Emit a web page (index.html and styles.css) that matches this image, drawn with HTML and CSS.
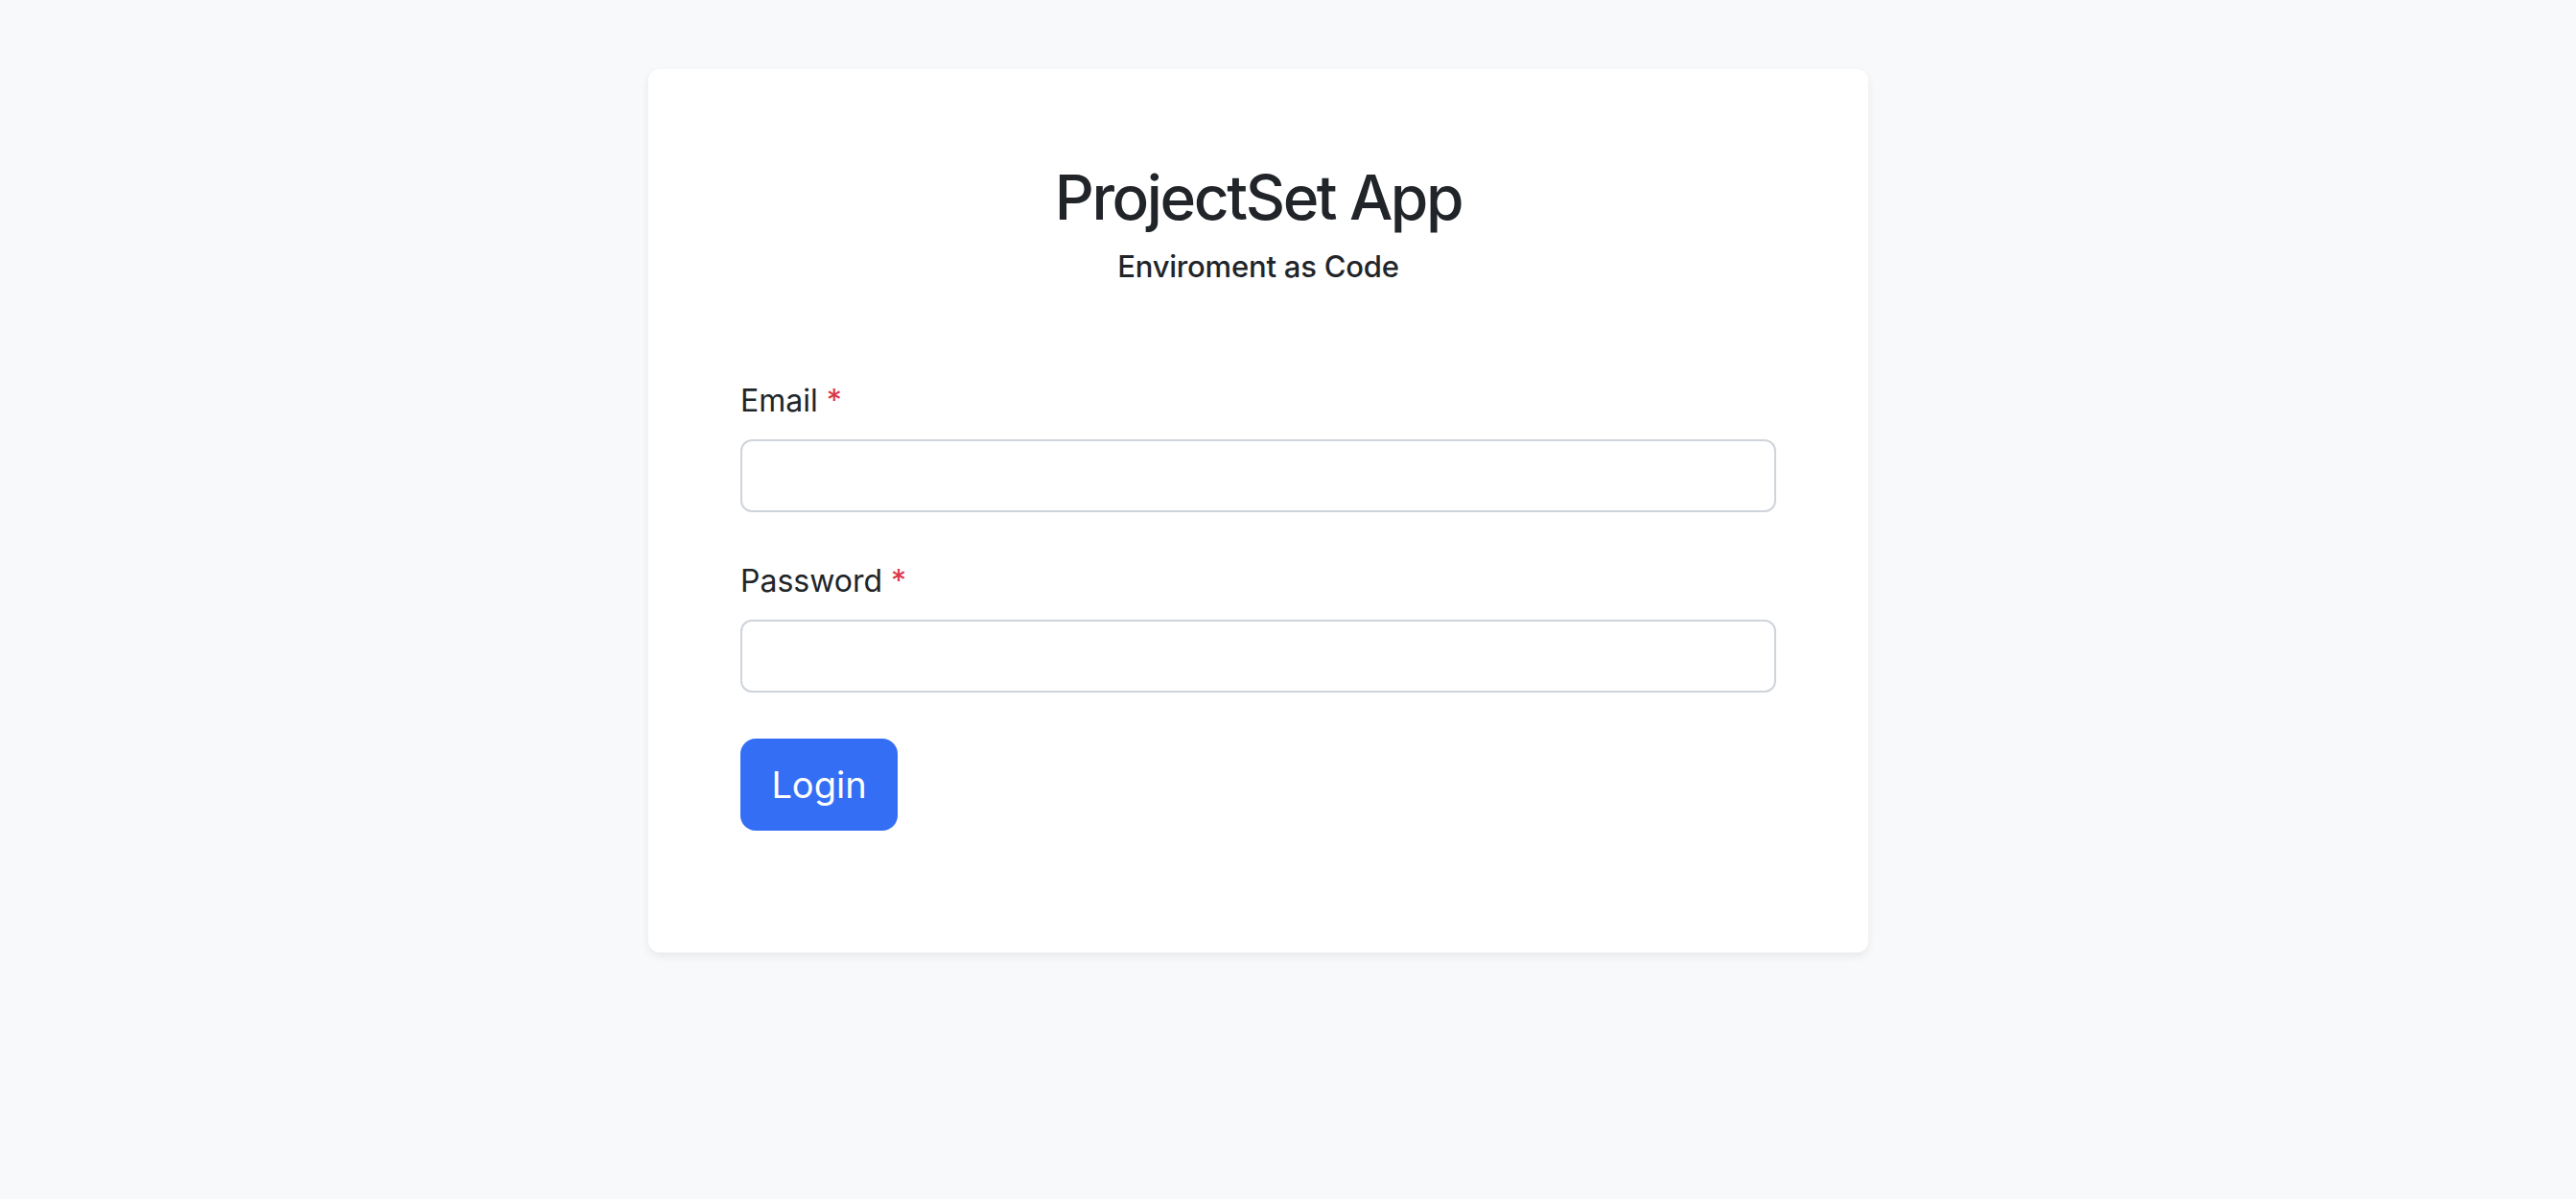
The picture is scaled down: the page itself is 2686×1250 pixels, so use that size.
FILE: index.html
```html
<!DOCTYPE html>
<html lang="en">
<head>
<meta charset="utf-8">
<title>ProjectSet App - Login</title>
<link rel="stylesheet" href="styles.css">
</head>
<body>
<main class="page">
  <section class="card">
    <header class="card-header">
      <h2 class="title">ProjectSet App</h2>
      <h6 class="subtitle">Enviroment as Code</h6>
    </header>
    <form class="login-form">
      <div class="field">
        <label class="label" for="email">Email <span class="req">*</span></label>
        <input class="input" id="email" type="email">
      </div>
      <div class="field">
        <label class="label" for="password">Password <span class="req">*</span></label>
        <input class="input" id="password" type="password">
      </div>
      <button class="btn" type="button">Login</button>
    </form>
  </section>
</main>
</body>
</html>
```
FILE: styles.css
```css
* { box-sizing: border-box; }
html, body {
  margin: 0;
  padding: 0;
  background: #f8f9fa;
  height: 100%;
}
body {
  font-family: Inter, "Noto Sans", "Liberation Sans", sans-serif;
  color: #212529;
}
.page {
  padding-top: 72px;
  padding-left: 676px;
}
.card {
  width: 1272px;
  height: 921px;
  background: #fff;
  border-radius: 12px;
  box-shadow: 0 4px 10px rgba(0, 0, 0, 0.07);
  padding: 96px;
}
.card-header {
  text-align: center;
  margin-bottom: 98px;
}
.title {
  margin: 0 0 14px;
  font-size: 64px;
  line-height: 1.2;
  font-weight: 500;
  letter-spacing: -2.4px;
}
.subtitle {
  margin: 0;
  font-size: 31px;
  line-height: 1.2;
  font-weight: 500;
  letter-spacing: -0.2px;
}
.field {
  margin-bottom: 48px;
}
.label {
  display: block;
  font-size: 32px;
  line-height: 48px;
  margin-bottom: 16px;
}
.req {
  color: #dc3545;
}
.input {
  display: block;
  width: 100%;
  height: 76px;
  border: 2px solid #ced4da;
  border-radius: 12px;
  background: #fff;
  font-size: 32px;
  padding: 12px 24px;
  font-family: inherit;
}
.btn {
  display: block;
  width: 164px;
  height: 96px;
  border: none;
  border-radius: 16px;
  background: #346ef4;
  color: #fff;
  font-family: inherit;
  font-size: 38px;
  line-height: 60px;
  padding: 0;
}
```
